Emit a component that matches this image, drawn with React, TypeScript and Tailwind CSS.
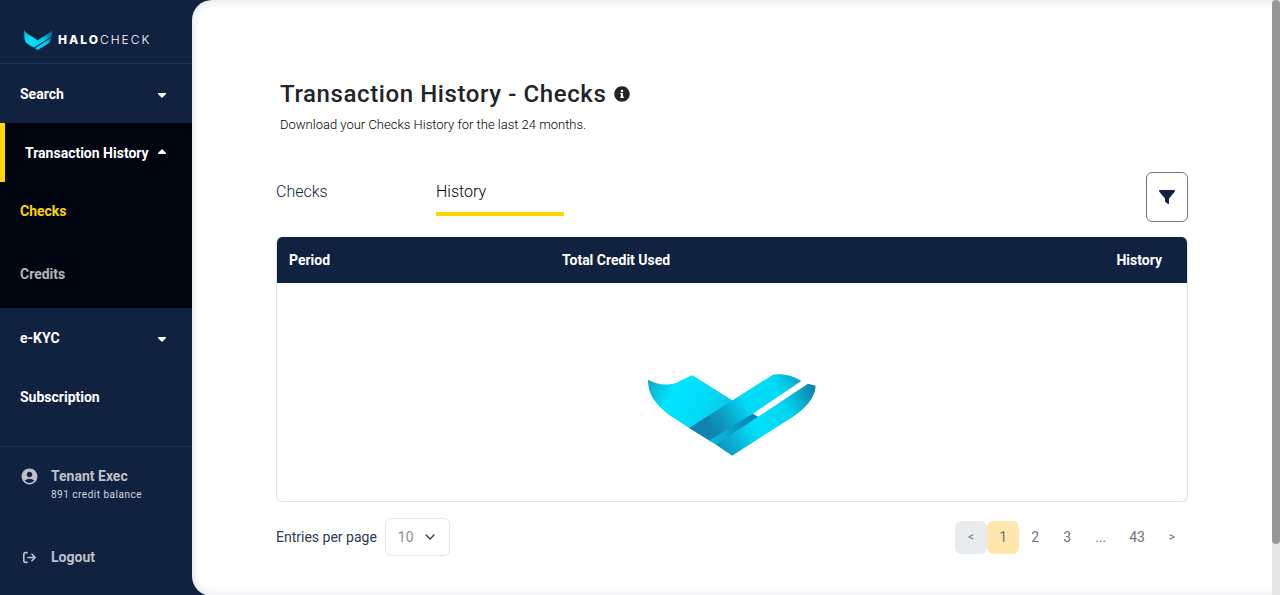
import { useId } from "react";
import { FaInfoCircle } from "react-icons/fa";
import { MdAccountCircle } from "react-icons/md";
import { FaArrowRightFromBracket } from "react-icons/fa6";
import { ChevronDown } from "lucide-react";

function HaloMark({ className }: { className?: string }) {
  const id = useId();
  return (
    <svg viewBox="54 44 503 244" className={className} preserveAspectRatio="none" aria-hidden="true">
      <defs>
        <linearGradient id={`${id}a`} gradientUnits="userSpaceOnUse" x1="55" y1="60" x2="290" y2="180">
          <stop offset="0" stopColor="#10a3c4" />
          <stop offset="0.3" stopColor="#00e5ff" />
          <stop offset="0.65" stopColor="#02dcf8" />
          <stop offset="1" stopColor="#08c8e8" />
        </linearGradient>
        <linearGradient id={`${id}b`} gradientUnits="userSpaceOnUse" x1="215" y1="215" x2="500" y2="45">
          <stop offset="0.08" stopColor="#0f84b0" />
          <stop offset="0.25" stopColor="#0c9fc6" />
          <stop offset="0.48" stopColor="#00dcf8" />
          <stop offset="0.78" stopColor="#00dcf6" />
          <stop offset="1" stopColor="#0aa5c6" />
        </linearGradient>
        <linearGradient id={`${id}c`} gradientUnits="userSpaceOnUse" x1="245" y1="248" x2="380" y2="165">
          <stop offset="0" stopColor="#08b8da" />
          <stop offset="0.3" stopColor="#0aaed2" />
          <stop offset="0.65" stopColor="#0e8db8" />
          <stop offset="1" stopColor="#0e86b0" />
        </linearGradient>
        <linearGradient id={`${id}d`} gradientUnits="userSpaceOnUse" x1="270" y1="265" x2="550" y2="95">
          <stop offset="0" stopColor="#0e94bd" />
          <stop offset="0.37" stopColor="#00e2fb" />
          <stop offset="0.7" stopColor="#02d6f0" />
          <stop offset="1" stopColor="#0f86ad" />
        </linearGradient>
      </defs>
      <path fill={`url(#${id}a)`} d="M54 61C80 75 110 80 142 69C158 61 172 54 187 48L306 122L320 124L190 212L177 205L128 173C85 142 54 112 54 61Z" />
      <path fill={`url(#${id}b)`} d="M177 205L428 46C460 42 490 50 513 65L368 162L370 165L241 245L237 242Z" />
      <path fill={`url(#${id}c)`} d="M237 242L368 162L384 171L380 176L261 257L257 254Z" />
      <path fill={`url(#${id}d)`} d="M257 254L384 171L533 73L556 79C555 115 525 147 487 172L306 287Z" />
    </svg>
  );
}

function HaloMarkSmall({ className }: { className?: string }) {
  const id = useId();
  return (
    <svg viewBox="0 0 84 60" className={className} aria-hidden="true">
      <defs>
        <linearGradient id={`${id}a`} gradientUnits="userSpaceOnUse" x1="0" y1="2" x2="36" y2="50">
          <stop offset="0" stopColor="#0b8fb0" />
          <stop offset="0.4" stopColor="#00e0fb" />
          <stop offset="1" stopColor="#00dcf8" />
        </linearGradient>
        <linearGradient id={`${id}b`} gradientUnits="userSpaceOnUse" x1="26" y1="48" x2="84" y2="4">
          <stop offset="0" stopColor="#00d2f0" />
          <stop offset="0.5" stopColor="#00cfec" />
          <stop offset="1" stopColor="#0c5a7c" />
        </linearGradient>
      </defs>
      <path fill={`url(#${id}a)`} d="M0 0C5 8 12 12 20 17L41 31L46 36L24 50L8 40C2 34 0 24 0 0Z" />
      <path fill={`url(#${id}b)`} d="M20 47L41 31L66 15C74 11 80 7 84 0C85 10 84 16 81 20L30 53Z" />
      <path fill={`url(#${id}b)`} d="M33 55L81 23C80 32 78 37 72 41L41 60Z" />
    </svg>
  );
}

function Caret({ up }: { up?: boolean }) {
  return (
    <svg viewBox="0 0 8 8" className="mr-0.5 size-2" fill="currentColor" aria-hidden="true">
      <path d={up ? "M0 5V4L4 0L8 4V5Z" : "M0 3V4L4 8L8 4V3Z"} />
    </svg>
  );
}

function FilterIcon() {
  return (
    <svg viewBox="0 0 16 14" className="h-3.5 w-4" fill="currentColor" aria-hidden="true">
      <path d="M1 0H15C16 0 16.300 1 15.700 1.700L10 8.500V13.300C10 14 9.300 14.200 8.800 13.800L6.500 12C6.200 11.700 6 11.500 6 11.100V8.500L0.300 1.700C-0.300 1 0 0 1 0Z" />
    </svg>
  );
}

const navItem = "flex h-[59px] w-full items-center justify-between pl-5 pr-6 text-left text-sm font-bold text-white";

function Sidebar() {
  return (
    <aside className="flex w-48 shrink-0 flex-col bg-[#112240]">
      <a href="#home" className="flex h-16 items-end gap-1.5 border-b border-[#1b3160] pb-[13px] pl-6 text-white">
        <HaloMarkSmall className="h-5 w-7" />
        <span className="font-[Inter,sans-serif] text-xs leading-5 tracking-[2px]">
          <b className="font-extrabold">HALO</b>
          <span className="font-light">CHECK</span>
        </span>
      </a>
      <nav aria-label="Main">
        <button className={navItem}>
          Search
          <Caret />
        </button>
        <div className="bg-[#00040f]">
          <button className="flex h-[59px] w-full items-center justify-between border-l-[5px] border-[#ffd500] pl-5 pr-6 text-left text-sm font-bold text-white">
            Transaction History
            <Caret up />
          </button>
          <a href="#checks" className="flex h-[58px] items-center pl-5 text-sm font-bold text-[#ffd500]">Checks</a>
          <a href="#credits" className="flex h-[68px] items-center pl-5 text-sm font-bold text-[#b3b5b9]">Credits</a>
        </div>
        <button className={navItem}>
          e-KYC
          <Caret />
        </button>
        <a href="#subscription" className={navItem}>Subscription</a>
      </nav>
      <div className="mt-auto flex h-[150px] flex-col border-t border-[#1b3160] pt-5 text-[#bcc1ca]">
        <div className="grid grid-cols-[31px_1fr] pl-5">
          <MdAccountCircle className="size-[19px]" />
          <div>
            <p className="text-sm font-bold leading-[18px]">Tenant Exec</p>
            <p className="text-[10px] leading-5 tracking-wider text-[#d3d6dc]">891 credit balance</p>
          </div>
        </div>
        <button className="mt-8 grid h-10 grid-cols-[31px_1fr] items-center pl-5 text-left text-sm font-bold">
          <FaArrowRightFromBracket className="ml-[3px] size-[13px]" />
          Logout
        </button>
      </div>
    </aside>
  );
}

const pageButton = "flex h-[33px] min-w-8 items-center justify-center rounded-md text-sm text-[#6c757d]";

function Pagination() {
  return (
    <nav aria-label="Pagination" className="flex items-center">
      <button className={`${pageButton} bg-[#e9ecef] text-xs`}>&lt;</button>
      <button aria-current="page" className={`${pageButton} bg-[#ffe7ad]`}>1</button>
      <button className={pageButton}>2</button>
      <button className={pageButton}>3</button>
      <span className={`${pageButton} px-3`}>...</span>
      <button className={`${pageButton} px-[11px]`}>43</button>
      <button className={`${pageButton} text-xs`}>&gt;</button>
    </nav>
  );
}

export default function App() {
  return (
    <div className="flex min-h-screen bg-[#112240] font-[Roboto,sans-serif] text-[#212529]">
      <Sidebar />
      <div className="flex min-w-0 flex-1 rounded-l-[20px] bg-white shadow-[inset_0_0_10px_rgba(17,34,64,0.16)]">
        <main className="min-w-0 flex-1 px-[84px] pt-[76px]">
          <header className="pl-1">
            <h1 className="flex items-center gap-2 text-2xl font-medium leading-9 tracking-wide">
              Transaction History - Checks
              <FaInfoCircle className="size-4" />
            </h1>
            <p className="text-[13px] font-light leading-[26px] text-black">Download your Checks History for the last 24 months.</p>
          </header>
          <div className="mt-[34px] flex h-[50px] items-start justify-between">
            <div role="tablist" className="flex gap-8 text-base">
              <button role="tab" aria-selected="false" className="h-11 w-32 pb-[5px] text-left font-light text-[#112240]">Checks</button>
              <button role="tab" aria-selected="true" className="h-11 w-32 border-b-4 border-[#ffd500] pb-px text-left font-light text-black">History</button>
            </div>
            <button aria-label="Filter" className="flex h-[50px] w-[42px] items-center justify-center rounded-md border border-[#6b7688] text-[#112240]">
              <FilterIcon />
            </button>
          </div>
          <div className="mt-[15px] overflow-hidden rounded-md border border-t-0 border-[#dee2e6]">
            <table className="w-full table-fixed text-sm text-white">
              <thead>
                <tr className="h-[46px] bg-[#112240]">
                  <th className="w-[30%] pl-3 text-left">Period</th>
                  <th className="w-[40%] pl-3 text-left">Total Credit Used</th>
                  <th className="w-[30%] pr-[25px] text-right">History</th>
                </tr>
              </thead>
              <tbody>
                <tr>
                  <td colSpan={3} className="h-[218px] pt-[46px]">
                    <HaloMark className="mx-auto h-[82px] w-[168px]" />
                  </td>
                </tr>
              </tbody>
            </table>
          </div>
          <div className="flex items-center justify-between pb-10 pt-4">
            <div className="flex items-center gap-2">
              <label htmlFor="entries" className="text-sm text-[#2c3b56]">Entries per page</label>
              <div className="grid items-center">
                <select id="entries" className="col-start-1 row-start-1 h-[38px] w-[65px] appearance-none rounded-md border border-[#e6e8eb] bg-white pl-3 text-sm text-[#8a8f96]">
                  <option>10</option>
                  <option>25</option>
                  <option>50</option>
                </select>
                <ChevronDown className="pointer-events-none col-start-1 row-start-1 mr-3 size-4 justify-self-end text-[#343a40]" />
              </div>
            </div>
            <Pagination />
          </div>
        </main>
        <div aria-hidden="true" className="flex w-2 flex-col bg-[#e8e8e8]">
          <div className="h-[544px] rounded bg-[#999]" />
        </div>
      </div>
    </div>
  );
}
